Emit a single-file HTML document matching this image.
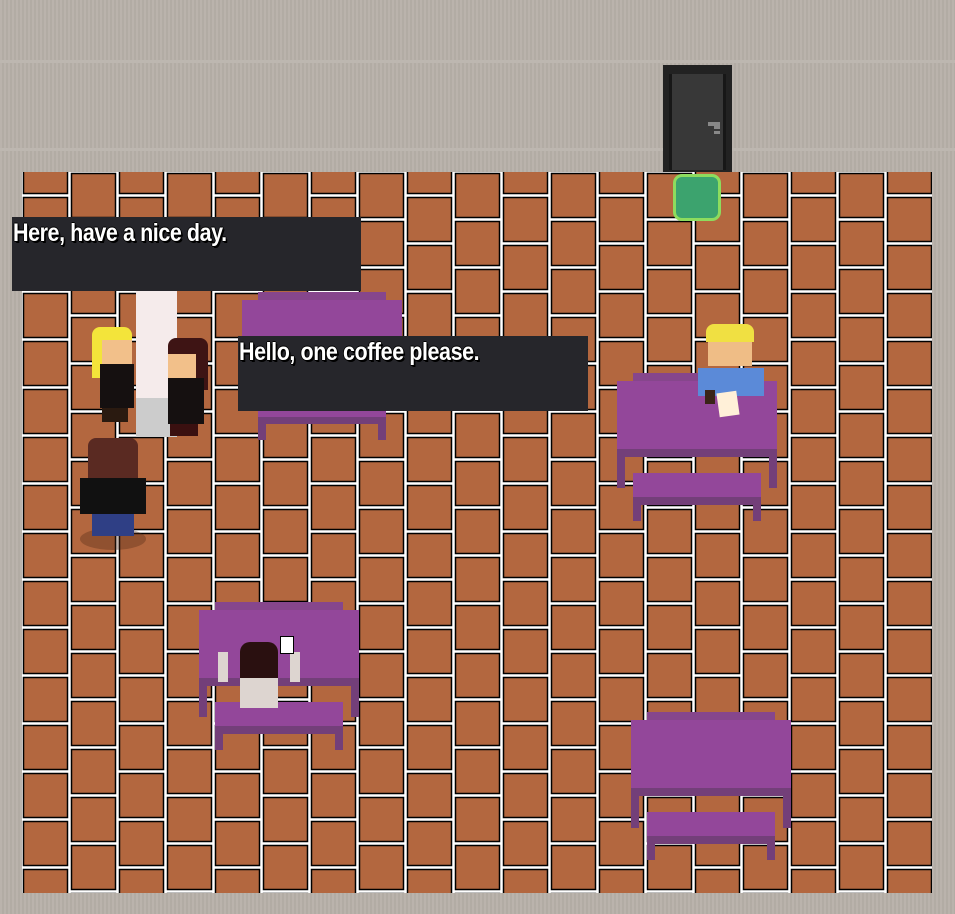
<!DOCTYPE html>
<html><head><meta charset="utf-8"><style>
html,body{margin:0;padding:0}
body{width:955px;height:914px;position:relative;overflow:hidden;background:#b8b1a9;
background-image:repeating-linear-gradient(90deg,rgba(255,255,255,0.03) 0 2px,rgba(0,0,0,0.03) 2px 4px);}
.a{position:absolute}
.bub{position:absolute;background:#26262b;}
.bub span{position:absolute;left:0;top:0;color:#fff;font-family:"Liberation Sans",sans-serif;font-weight:bold;font-size:25px;line-height:30px;white-space:nowrap;transform-origin:0 0;transform:scaleX(0.86);letter-spacing:-0.5px;
text-shadow:1px 1px 0 #000,-1px 0 0 #000,0 -1px 0 #000,1px 0 0 #000,0 1px 0 #000,2px 2px 0 #000;}
.top{background:#93479a}.edge{background:#733f79}.back{background:#86468c}.leg{background:#733f79}
</style></head><body>
<div class="a" style="left:0;top:60px;width:955px;height:3px;background:#bdb7b0"></div>
<div class="a" style="left:0;top:148px;width:955px;height:3px;background:#bdb7b0"></div>
<svg class="a" style="left:22px;top:172px" width="910" height="721">
<defs><pattern id="p" x="0" y="0" width="96" height="48" patternUnits="userSpaceOnUse">
<rect width="96" height="48" fill="#fff"/>
<rect x="1.5" y="-22.5" width="44" height="44" fill="#b3673f" stroke="#000" stroke-width="1.5"/>
<rect x="1.5" y="25.5" width="44" height="44" fill="#b3673f" stroke="#000" stroke-width="1.5"/>
<rect x="49.5" y="1.5" width="44" height="44" fill="#b3673f" stroke="#000" stroke-width="1.5"/>
</pattern></defs>
<rect width="910" height="721" fill="url(#p)"/>
</svg>
<!-- door -->
<div class="a" style="left:663px;top:65px;width:69px;height:107px;background:#222"></div>
<div class="a" style="left:669px;top:74px;width:57px;height:96px;background:#171717"></div>
<div class="a" style="left:672px;top:74px;width:51px;height:96px;background:#383838"></div>
<div class="a" style="left:708px;top:122px;width:12px;height:4px;background:#888"></div>
<div class="a" style="left:714px;top:126px;width:6px;height:3px;background:#888"></div>
<div class="a" style="left:714px;top:131px;width:6px;height:3px;background:#888"></div>
<!-- green tile -->
<div class="a" style="left:673px;top:174px;width:42px;height:41px;background:#3ca36e;border:3px solid #8ddc5e;border-radius:9px"></div>
<!-- pillar -->
<div class="a" style="left:136px;top:291px;width:41px;height:107px;background:#f5ebeb"></div>
<div class="a" style="left:136px;top:398px;width:41px;height:39px;background:#cccccc"></div>
<!-- table 1 -->
<div class="a back" style="left:258px;top:292px;width:128px;height:8px"></div>
<div class="a top" style="left:242px;top:300px;width:160px;height:68px"></div>
<div class="a top" style="left:258px;top:392px;width:128px;height:25px"></div>
<div class="a edge" style="left:258px;top:417px;width:128px;height:7px"></div>
<div class="a leg" style="left:258px;top:424px;width:8px;height:16px"></div>
<div class="a leg" style="left:378px;top:424px;width:8px;height:16px"></div>
<!-- table 2 -->
<div class="a back" style="left:633px;top:373px;width:128px;height:8px"></div>
<div class="a top" style="left:617px;top:381px;width:160px;height:68px"></div>
<div class="a edge" style="left:617px;top:449px;width:160px;height:8px"></div>
<div class="a leg" style="left:617px;top:457px;width:8px;height:31px"></div>
<div class="a leg" style="left:769px;top:457px;width:8px;height:31px"></div>
<div class="a top" style="left:633px;top:473px;width:128px;height:24px"></div>
<div class="a edge" style="left:633px;top:497px;width:128px;height:8px"></div>
<div class="a leg" style="left:633px;top:505px;width:8px;height:16px"></div>
<div class="a leg" style="left:753px;top:505px;width:8px;height:16px"></div>
<!-- table 3 -->
<div class="a back" style="left:215px;top:602px;width:128px;height:8px"></div>
<div class="a top" style="left:199px;top:610px;width:160px;height:68px"></div>
<div class="a edge" style="left:199px;top:678px;width:160px;height:8px"></div>
<div class="a leg" style="left:199px;top:686px;width:8px;height:31px"></div>
<div class="a leg" style="left:351px;top:686px;width:8px;height:31px"></div>
<div class="a top" style="left:215px;top:702px;width:128px;height:24px"></div>
<div class="a edge" style="left:215px;top:726px;width:128px;height:8px"></div>
<div class="a leg" style="left:215px;top:734px;width:8px;height:16px"></div>
<div class="a leg" style="left:335px;top:734px;width:8px;height:16px"></div>
<!-- table 4 -->
<div class="a back" style="left:647px;top:712px;width:128px;height:8px"></div>
<div class="a top" style="left:631px;top:720px;width:160px;height:68px"></div>
<div class="a edge" style="left:631px;top:788px;width:160px;height:8px"></div>
<div class="a leg" style="left:631px;top:796px;width:8px;height:32px"></div>
<div class="a leg" style="left:783px;top:796px;width:8px;height:32px"></div>
<div class="a top" style="left:647px;top:812px;width:128px;height:24px"></div>
<div class="a edge" style="left:647px;top:836px;width:128px;height:8px"></div>
<div class="a leg" style="left:647px;top:844px;width:8px;height:16px"></div>
<div class="a leg" style="left:767px;top:844px;width:8px;height:16px"></div>
<!-- blonde girl -->
<div class="a" style="left:92px;top:327px;width:40px;height:20px;background:#f3e43a;border-radius:8px 8px 0 0"></div>
<div class="a" style="left:92px;top:340px;width:10px;height:38px;background:#f3e43a"></div>
<div class="a" style="left:102px;top:340px;width:30px;height:24px;background:#f2c08a"></div>
<div class="a" style="left:100px;top:364px;width:34px;height:44px;background:#151010"></div>
<div class="a" style="left:102px;top:408px;width:26px;height:14px;background:#2a1a10"></div>
<!-- red-haired girl -->
<div class="a" style="left:168px;top:338px;width:40px;height:20px;background:#3e1414;border-radius:8px 8px 0 0"></div>
<div class="a" style="left:196px;top:350px;width:12px;height:40px;background:#3e1414"></div>
<div class="a" style="left:168px;top:354px;width:28px;height:24px;background:#f2c08a"></div>
<div class="a" style="left:168px;top:378px;width:36px;height:46px;background:#151010"></div>
<div class="a" style="left:170px;top:424px;width:28px;height:12px;background:#3a1010"></div>
<!-- back figure -->
<div class="a" style="left:80px;top:528px;width:66px;height:22px;background:rgba(80,40,20,0.35);border-radius:50%"></div>
<div class="a" style="left:88px;top:438px;width:50px;height:40px;background:#5a2a22;border-radius:8px 8px 0 0"></div>
<div class="a" style="left:80px;top:478px;width:66px;height:36px;background:#111"></div>
<div class="a" style="left:92px;top:514px;width:42px;height:22px;background:#2f3f85"></div>
<!-- right man -->
<div class="a" style="left:706px;top:324px;width:48px;height:18px;background:#f0e042;border-radius:8px 8px 0 0"></div>
<div class="a" style="left:708px;top:342px;width:44px;height:24px;background:#efbd86"></div>
<div class="a" style="left:698px;top:368px;width:66px;height:28px;background:#5b8ad8"></div>
<div class="a" style="left:718px;top:392px;width:20px;height:24px;background:#fff0d8;transform:rotate(-8deg)"></div>
<div class="a" style="left:705px;top:390px;width:10px;height:14px;background:#3a2418"></div>
<!-- bottom figure -->
<div class="a" style="left:240px;top:642px;width:38px;height:40px;background:#2a1010;border-radius:10px 10px 0 0"></div>
<div class="a" style="left:218px;top:652px;width:10px;height:30px;background:#ddd5d0"></div>
<div class="a" style="left:290px;top:652px;width:10px;height:30px;background:#ddd5d0"></div>
<div class="a" style="left:240px;top:678px;width:38px;height:30px;background:#ddd5d0"></div>
<div class="a" style="left:280px;top:636px;width:12px;height:16px;background:#fff;border:1px solid #000"></div>
<!-- bubbles -->
<div class="bub" style="left:12px;top:217px;width:349px;height:74px"><span style="left:1px;top:1px">Here, have a nice day.</span></div>
<div class="bub" style="left:238px;top:336px;width:350px;height:75px"><span style="left:1px;top:1px">Hello, one coffee please.</span></div>
</body></html>
